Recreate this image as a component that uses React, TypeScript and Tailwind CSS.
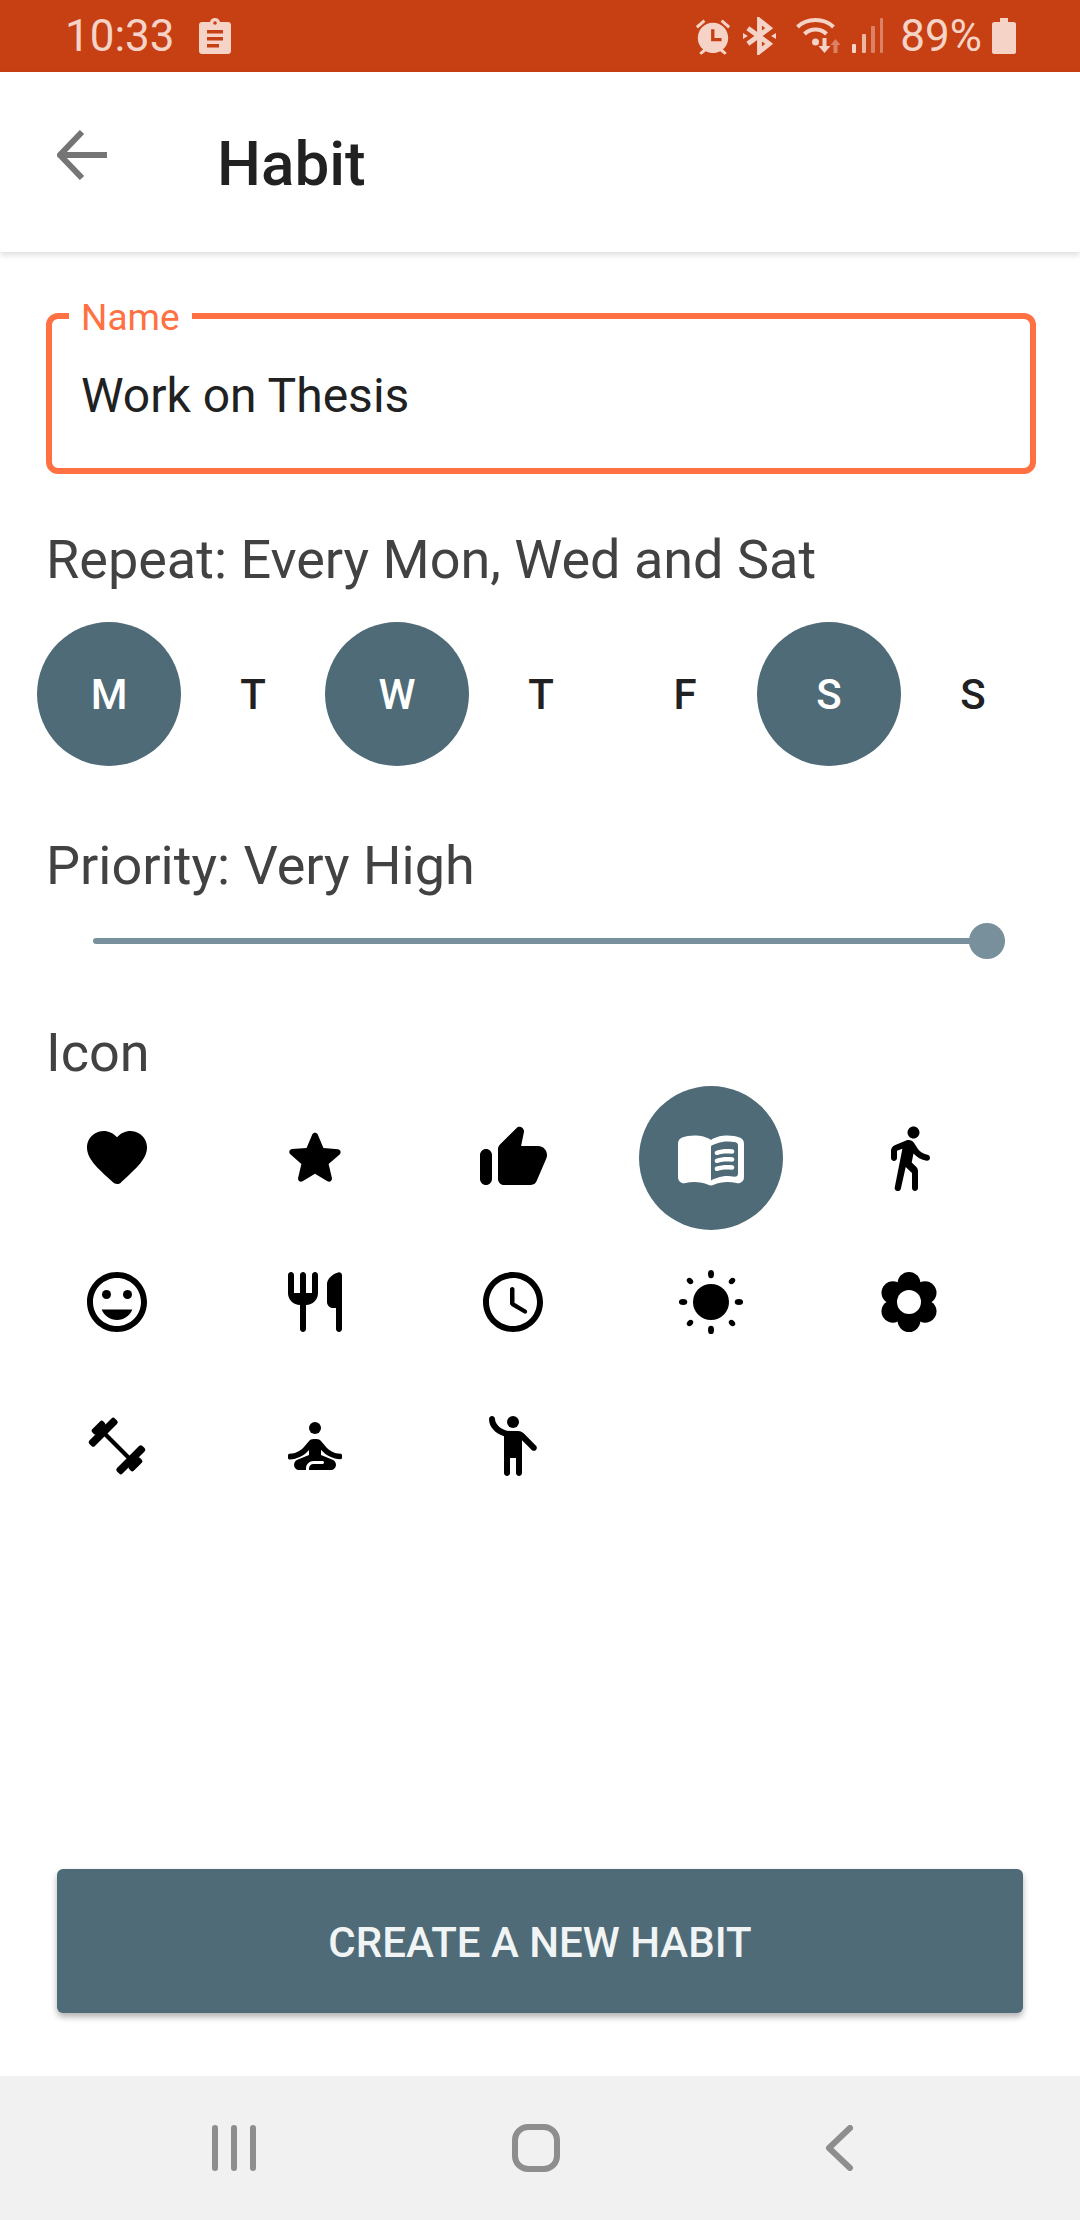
import { ReactNode } from 'react';

const days = [
  { label: 'M', on: true },
  { label: 'T', on: false },
  { label: 'W', on: true },
  { label: 'T', on: false },
  { label: 'F', on: false },
  { label: 'S', on: true },
  { label: 'S', on: false },
];

function Icon({ children }: { children: ReactNode }) {
  return (
    <svg viewBox="0 0 24 24" fill="currentColor" className="w-[72px] h-[72px]">
      {children}
    </svg>
  );
}

const FLOWER_ANGLES = [-90, -30, 30, 90, 150, 210];

const icons: { key: string; on?: boolean; node: ReactNode }[] = [
  {
    key: 'heart',
    node: <path d="M13.35 20.13c-.76.69-1.93.69-2.69-.01l-.11-.1C5.3 15.27 1.87 12.16 2 8.28c.06-1.7.93-3.33 2.34-4.29 2.64-1.8 5.9-.96 7.66 1.1 1.76-2.06 5.02-2.91 7.66-1.1 1.41.96 2.28 2.59 2.34 4.29.14 3.88-3.3 6.99-8.55 11.76l-.1.09z" />,
  },
  {
    key: 'star',
    node: <path d="M12 17.27l4.15 2.51c.76.46 1.69-.22 1.49-1.08l-1.1-4.72 3.67-3.18c.67-.58.31-1.68-.57-1.75l-4.83-.41-1.89-4.46c-.34-.81-1.5-.81-1.84 0L9.19 8.63l-4.83.41c-.88.07-1.24 1.17-.57 1.75l3.67 3.18-1.1 4.72c-.2.86.73 1.54 1.49 1.08l4.15-2.5z" />,
  },
  {
    key: 'thumb',
    node: <path d="M13.12 2.06L7.58 7.6c-.37.37-.58.88-.58 1.41V19c0 1.1.9 2 2 2h9c.8 0 1.52-.48 1.84-1.21l3.26-7.61C23.94 10.2 22.49 8 20.34 8h-5.65l.95-4.58c.1-.5-.05-1.01-.41-1.37-.59-.58-1.53-.58-2.11.01zM3 21c1.1 0 2-.9 2-2v-8c0-1.1-.9-2-2-2s-2 .9-2 2v8c0 1.1.9 2 2 2z" />,
  },
  {
    key: 'book',
    on: true,
    node: (
      <>
        <path d="M17.5 4.5c-1.95 0-4.05.4-5.5 1.5-1.45-1.1-3.55-1.5-5.5-1.5-1.45 0-2.99.22-4.28.79C1.49 5.62 1 6.33 1 7.14v11.28c0 1.3 1.22 2.26 2.48 1.94.98-.25 2.02-.36 3.02-.36 1.56 0 3.22.26 4.56.92.6.3 1.28.3 1.87 0 1.34-.67 3-.92 4.56-.92 1 0 2.04.11 3.02.36 1.26.33 2.48-.63 2.48-1.94V7.14c0-.81-.49-1.52-1.22-1.85-1.28-.57-2.82-.79-4.27-.79zM21 17.23c0 .63-.58 1.09-1.2.98-.75-.14-1.53-.2-2.3-.2-1.7 0-4.15.65-5.5 1.5V8c1.35-.85 3.8-1.5 5.5-1.5.92 0 1.83.09 2.7.28.46.1.8.51.8.98v9.47z" />
        <path d="M13.98 11.01c-.32 0-.61-.2-.71-.52-.13-.39.09-.82.48-.94 1.54-.5 3.53-.66 5.36-.45.41.05.71.42.66.83-.05.41-.42.71-.83.66-1.62-.19-3.39-.04-4.73.39-.08.01-.16.03-.23.03z" />
        <path d="M13.98 13.67c-.32 0-.61-.2-.71-.52-.13-.39.09-.82.48-.94 1.53-.5 3.53-.66 5.36-.45.41.05.71.42.66.83-.05.41-.42.7-.83.66-1.62-.19-3.39-.04-4.73.39-.08.02-.16.03-.23.03z" />
        <path d="M13.98 16.33c-.32 0-.61-.2-.71-.52-.13-.39.09-.82.48-.94 1.53-.5 3.53-.66 5.36-.45.41.05.71.42.66.83-.05.41-.42.7-.83.66-1.62-.19-3.39-.04-4.73.39-.08.02-.16.03-.23.03z" />
      </>
    ),
  },
  {
    key: 'walk',
    node: <path d="M13.5 5.500c1.100 0 2-.9 2-2s-.9-2-2-2-2 .9-2 2 .9 2 2 2zM9.800 8.900L7.240 21.810c-.13.61.35 1.190.98 1.190h.08c.47 0 .87-.32.98-.78L10.900 15l2.100 2v5c0 .55.45 1 1 1s1-.45 1-1v-5.640c0-.55-.22-1.070-.62-1.450L12.900 13.500l.6-3c1.070 1.240 2.620 2.130 4.360 2.410.6.09 1.140-.39 1.140-1 0-.49-.36-.9-.85-.98-1.520-.25-2.780-1.150-3.450-2.330l-1-1.600c-.56-.89-1.680-1.250-2.650-.84L7.220 7.780C6.480 8.100 6 8.820 6 9.630V12c0 .55.45 1 1 1s1-.45 1-1V9.600l1.800-.7z" />,
  },
  {
    key: 'mood',
    node: (
      <>
        <path d="M11.99 2C6.47 2 2 6.48 2 12s4.47 10 9.99 10C17.52 22 22 17.52 22 12S17.52 2 11.99 2zM12 20c-4.42 0-8-3.58-8-8s3.58-8 8-8 8 3.58 8 8-3.58 8-8 8z" />
        <circle cx="15.5" cy="9.5" r="1.5" />
        <circle cx="8.5" cy="9.5" r="1.5" />
        <path d="M12 18c2.33 0 4.31-1.46 5.11-3.5H6.89c.8 2.04 2.78 3.5 5.11 3.5z" />
      </>
    ),
  },
  {
    key: 'food',
    node: <path d="M16 6v6c0 1.1.9 2 2 2h1v7c0 .55.45 1 1 1s1-.45 1-1V3.13c0-.65-.61-1.13-1.24-.98C17.6 2.68 16 4.51 16 6zm-5 3H9V3c0-.55-.45-1-1-1s-1 .45-1 1v6H5V3c0-.55-.45-1-1-1s-1 .45-1 1v6c0 2.21 1.79 4 4 4v8c0 .55.45 1 1 1s1-.45 1-1v-8c2.21 0 4-1.79 4-4V3c0-.55-.45-1-1-1s-1 .45-1 1v6z" />,
  },
  {
    key: 'clock',
    node: (
      <>
        <path d="M11.99 2C6.47 2 2 6.48 2 12s4.47 10 9.99 10C17.52 22 22 17.52 22 12S17.52 2 11.99 2zM12 20c-4.42 0-8-3.58-8-8s3.58-8 8-8 8 3.58 8 8-3.58 8-8 8z" />
        <path d="M11.78 7h-.06c-.4 0-.72.32-.72.72v4.72c0 .35.18.68.49.86l4.15 2.49c.34.2.78.1.98-.24.21-.34.1-.79-.25-.99l-3.87-2.3V7.72c0-.4-.32-.72-.72-.72z" />
      </>
    ),
  },
  {
    key: 'sun',
    node: (
      <>
        <circle cx="12" cy="12" r="6" />
        <ellipse cx="12" cy="2.7" rx="1" ry="1.4" />
        <ellipse cx="12" cy="21.3" rx="1" ry="1.4" />
        <ellipse cx="2.7" cy="12" rx="1.4" ry="1" />
        <ellipse cx="21.3" cy="12" rx="1.4" ry="1" />
        <ellipse cx="5" cy="5" rx="1.2" ry=".9" transform="rotate(45 5 5)" />
        <ellipse cx="19" cy="5" rx="1.2" ry=".9" transform="rotate(-45 19 5)" />
        <ellipse cx="5" cy="19" rx="1.2" ry=".9" transform="rotate(-45 5 19)" />
        <ellipse cx="19" cy="19" rx="1.2" ry=".9" transform="rotate(45 19 19)" />
      </>
    ),
  },
  {
    key: 'flower',
    node: (
      <>
        <circle cx="12" cy="12" r="6.5" />
        {FLOWER_ANGLES.map((a) => (
          <circle
            key={a}
            cx={12 + 6.2 * Math.cos((a * Math.PI) / 180)}
            cy={12 + 6.2 * Math.sin((a * Math.PI) / 180)}
            r="3.8"
          />
        ))}
        <circle cx="12" cy="12" r="4" fill="#ffffff" />
      </>
    ),
  },
  {
    key: 'fitness',
    node: (
      <g transform="rotate(45 12 12)">
        <rect x="4" y="11.3" width="16" height="1.4" />
        <rect x="4.200" y="6" width="2.600" height="12" rx=".8" />
        <rect x="17.200" y="6" width="2.600" height="12" rx=".8" />
        <rect x="2.200" y="9.400" width="2.200" height="5.200" rx=".7" />
        <rect x="19.600" y="9.400" width="2.200" height="5.200" rx=".7" />
      </g>
    ),
  },
  {
    key: 'meditate',
    node: (
      <>
        <circle cx="12" cy="6" r="2" />
        <path d="M21 16v-.9c0-.3-.2-.5-.5-.5-2.1-.1-3.8-1-5.1-2.6l-1.34-1.6c-.38-.46-.94-.72-1.53-.72h-1.05c-.59 0-1.15.26-1.53.72l-1.34 1.6c-1.3 1.6-3 2.5-5.1 2.6-.3 0-.5.2-.5.5v.9c0 .3.2.5.5.5 2.6-.1 4.8-1.2 6.5-3.15V15l-3.88 1.55c-.67.27-1.12.93-1.12 1.66C5 19.2 5.8 20 6.79 20H9v-.5c0-1.38 1.12-2.5 2.5-2.5h3c.28 0 .5.22.5.5s-.22.5-.5.5h-3c-.83 0-1.5.67-1.5 1.5v.5h7.21c.99 0 1.79-.8 1.79-1.79 0-.73-.45-1.39-1.12-1.66L14 15v-1.75c1.7 1.95 3.9 3.05 6.5 3.15.3 0 .5-.2.5-.4z" />
      </>
    ),
  },
  {
    key: 'person',
    node: (
      <>
        <circle cx="12" cy="4" r="2" />
        <path d="M15.89 8.11C15.5 7.72 14.83 7 13.53 7h-2.54C8.24 6.99 6 4.75 6 3c0-.55-.45-1-1-1s-1 .45-1 1c0 2.700 2.110 4.840 5 5.710V21c0 .55.45 1 1 1s1-.45 1-1v-5h2v5c0 .55.45 1 1 1s1-.45 1-1V10.050l3.250 3.250c.39.39 1.020.39 1.410 0s.39-1.020 0-1.410l-3.770-3.780z" />
      </>
    ),
  },
];

export default function App() {
  return (
    <div className="w-[1080px] h-[2220px] flex flex-col bg-white overflow-hidden font-['Roboto',sans-serif]">
      {/* Status bar */}
      <div className="h-[72px] shrink-0 bg-[#c74014] flex items-center pl-[65px] pr-[64px] text-[#f5d3c6]">
        <span className="text-[44px] leading-none">10:33</span>
        <svg viewBox="0 0 32 36" fill="currentColor" className="w-[32px] h-[36px] ml-[24px]">
          <path d="M3 4h8c.5-2.5 2.500-4 5-4s4.500 1.500 5 4h8c1.700 0 3 1.300 3 3v26c0 1.700-1.300 3-3 3H3c-1.700 0-3-1.300-3-3V7c0-1.700 1.300-3 3-3z" />
          <rect x="8" y="12" width="16" height="3.500" fill="#c74014" />
          <rect x="8" y="19" width="16" height="3.500" fill="#c74014" />
          <rect x="8" y="26" width="12" height="3.500" fill="#c74014" />
          <circle cx="16" cy="5" r="1.800" fill="#c74014" />
        </svg>
        <div className="ml-auto flex items-center">
          {/* alarm */}
          <svg viewBox="0 0 40 40" fill="currentColor" className="w-[38px] h-[38px]">
            <path d="M20 6C10.600 6 4 13.400 4 22c0 5 2.200 9.300 5.600 12L5.500 38l2.200 1.800 4.800-3.800c2.200 1.200 4.800 1.900 7.500 1.900s5.300-.7 7.500-1.900l4.800 3.800 2.200-1.800-4.100-4c3.400-2.700 5.600-7 5.600-12C36 13.400 29.400 6 20 6z" />
            <path d="M2 9.500 10 2.500l2 2.500-8 7zM38 9.500 30 2.500l-2 2.500 8 7z" />
            <path d="M18 13h3.500v9H29v3.500H18z" fill="#c74014" />
          </svg>
          {/* bluetooth */}
          <svg viewBox="0 0 34 36" fill="none" stroke="currentColor" strokeWidth="5" className="w-[33px] h-[38px] ml-[11px]">
            <path d="M5 10 27 26 17 34V2l10 8L5 26" />
            <path d="M0 15l5 3-5 3zM34 15l-5 3 5 3z" fill="currentColor" stroke="none" />
          </svg>
          {/* wifi + data arrows */}
          <svg viewBox="0 0 44 38" className="w-[47px] h-[38px] ml-[18px]" fill="none">
            <path d="M2 10C6 6 12 3 20 3s14 3 18 7" stroke="currentColor" strokeWidth="4" />
            <path d="M9 17c3-3 7-4.500 11-4.500S28 14 31 17" stroke="currentColor" strokeWidth="4" />
            <circle cx="20" cy="25" r="3.500" fill="currentColor" />
            <path d="M27 21h4v8h4l-6 7-6-7h4z" fill="currentColor" />
            <path d="M40 22l-5 6h3v8h4v-8h3z" fill="currentColor" opacity=".45" />
          </svg>
          {/* signal */}
          <svg viewBox="0 0 32 36" fill="currentColor" className="w-[32px] h-[36px] ml-[10px]">
            <rect x="1" y="26" width="4" height="9" rx="1" />
            <rect x="11" y="16" width="4" height="19" rx="1" opacity=".8" />
            <rect x="20" y="8" width="4" height="27" rx="1" opacity=".45" />
            <rect x="29" y="0" width="3" height="35" rx="1" opacity=".45" />
          </svg>
          <span className="text-[44px] leading-none ml-[17px]">89%</span>
          <svg viewBox="0 0 24 36" fill="currentColor" className="w-[24px] h-[36px] ml-[10px]">
            <path d="M8 0h8v4h6c1 0 2 1 2 2v28c0 1-1 2-2 2H2c-1 0-2-1-2-2V6c0-1 1-2 2-2h6z" />
          </svg>
        </div>
      </div>

      {/* App bar */}
      <div className="h-[180px] shrink-0 flex items-center shadow-[0_3px_6px_rgba(0,0,0,0.13)] relative">
        <svg viewBox="0 0 50 50" fill="none" stroke="#757575" strokeWidth="6" className="w-[50px] h-[50px] ml-[57px] -mt-[14px]">
          <path d="M50 25H4M25 2 3 25l22 23" />
        </svg>
        <h1 className="ml-[110px] pt-[3px] text-[62px] leading-none font-medium text-[#212121]">Habit</h1>
      </div>

      {/* Form */}
      <div className="flex-1 flex flex-col px-[46px] pt-[61px]">
        <div className="relative h-[161px] w-[990px] rounded-[12px] border-[6px] border-[#ff7043] flex items-center pl-[29px] pt-[4px]">
          <span className="absolute -top-[19px] left-[17px] bg-white px-[12px] text-[37px] leading-[36px] text-[#ff7043]">Name</span>
          <span className="text-[48px] leading-none text-[#212121]">Work on Thesis</span>
        </div>

        <p className="mt-[56px] text-[54px] leading-[60px] text-[#424242]">Repeat: Every Mon, Wed and Sat</p>

        <div className="mt-[32px] -ml-[9px] flex">
          {days.map((d, i) => (
            <div
              key={i}
              className={d.on ? 'w-[144px] h-[144px] shrink-0 rounded-full bg-[#4f6b77] flex items-center justify-center text-[42px] font-medium text-white' : 'w-[144px] h-[144px] shrink-0 rounded-full flex items-center justify-center text-[42px] font-medium text-[#212121]'}
            >
              {d.label}
            </div>
          ))}
        </div>

        <p className="mt-[70px] text-[54px] leading-[60px] text-[#424242]">Priority: Very High</p>

        {/* Slider */}
        <div className="mt-[27px] ml-[47px] w-[912px] h-[36px] flex items-center relative">
          <div className="h-[6px] flex-1 bg-[#78909c] rounded-full" />
          <div className="absolute right-0 top-0 w-[36px] h-[36px] rounded-full bg-[#78909c]" />
        </div>

        <p className="mt-[64px] text-[54px] leading-[60px] text-[#424242]">Icon</p>

        {/* Icon grid */}
        <div className="mt-[3px] -ml-[28px] grid grid-cols-[repeat(5,198px)] auto-rows-[144px] w-[990px]">
          {icons.map((ic) => (
            <div key={ic.key} className="flex items-center justify-center">
              <div className={ic.on ? 'w-[144px] h-[144px] rounded-full bg-[#4f6b77] text-white flex items-center justify-center' : 'w-[144px] h-[144px] rounded-full text-black flex items-center justify-center'}>
                <Icon>{ic.node}</Icon>
              </div>
            </div>
          ))}
        </div>

        <button className="mt-auto mb-[63px] mx-[11px] h-[144px] rounded-[6px] bg-[#4f6b77] text-[#f1f4f5] text-[42px] font-medium pt-[2px] shadow-[0_4px_6px_rgba(0,0,0,0.3)]">
          CREATE A NEW HABIT
        </button>
      </div>

      {/* Nav bar */}
      <div className="h-[144px] shrink-0 bg-[#f1f1f1] flex items-center text-[#8e8e8e]">
        <svg viewBox="0 0 44 46" fill="currentColor" className="w-[44px] h-[46px] ml-[212px]">
          <rect x="0" y="0" width="6" height="46" rx="3" />
          <rect x="19" y="0" width="6" height="46" rx="3" />
          <rect x="38" y="0" width="6" height="46" rx="3" />
        </svg>
        <svg viewBox="0 0 48 48" fill="none" stroke="currentColor" strokeWidth="6" className="w-[48px] h-[48px] ml-[256px]">
          <rect x="3" y="3" width="42" height="42" rx="13" />
        </svg>
        <svg viewBox="0 0 28 46" fill="none" stroke="currentColor" strokeWidth="6" strokeLinecap="round" strokeLinejoin="round" className="w-[28px] h-[46px] ml-[265px]">
          <path d="M25 3 4 23l21 20" />
        </svg>
      </div>
    </div>
  );
}
